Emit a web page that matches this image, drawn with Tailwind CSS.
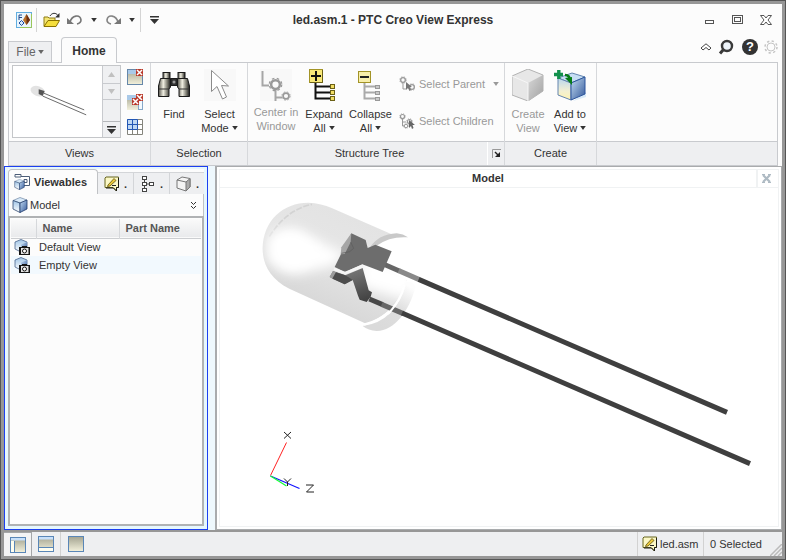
<!DOCTYPE html>
<html lang="en">
<head>
<meta charset="utf-8">
<title>led.asm.1 - PTC Creo View Express</title>
<script src="https://cdn.jsdelivr.net/npm/@tailwindcss/browser@4"></script>
</head>
<body>
<svg class="absolute size-0" aria-hidden="true">
  <defs>
    <linearGradient id="blueFace" x1="0" y1="0" x2="1" y2="1"><stop offset="0" stop-color="#c3ddf3"/><stop offset="1" stop-color="#35599b"/></linearGradient>
    <linearGradient id="creamFace" x1="0" y1="0" x2="0" y2="1"><stop offset="0" stop-color="#b9d6ef"/><stop offset=".6" stop-color="#f3f0d2"/><stop offset="1" stop-color="#fff3b0"/></linearGradient>
    <linearGradient id="paleFace" x1="0" y1="0" x2="0" y2="1"><stop offset="0" stop-color="#9fc4e6"/><stop offset="1" stop-color="#ffffff"/></linearGradient>
    <linearGradient id="greyFace" x1="0" y1="0" x2="1" y2="1"><stop offset="0" stop-color="#d8d8d8"/><stop offset="1" stop-color="#a2a2a2"/></linearGradient>
    <linearGradient id="pane" x1="0" y1="0" x2="0" y2="1"><stop offset="0" stop-color="#a3a390"/><stop offset="1" stop-color="#f3f1dc"/></linearGradient>
    <linearGradient id="barrel" x1="0" y1="0" x2="1" y2="0"><stop offset="0" stop-color="#55544c"/><stop offset=".4" stop-color="#f1efe2"/><stop offset=".75" stop-color="#77766c"/><stop offset="1" stop-color="#1b1b1b"/></linearGradient>
    <symbol id="cubeBlue" viewBox="0 0 16 16">
      <path d="M1 3.500 8 .5 15 3 8 6Z" fill="#d7e9f8" stroke="#5a7396" stroke-width=".6"/>
      <path d="M1 3.500 8 6V15.500L1 12Z" fill="url(#paleFace)" stroke="#2e4870" stroke-width=".8"/>
      <path d="M8 6 15 3V12L8 15.500Z" fill="url(#blueFace)" stroke="#1f3a6b" stroke-width=".8"/>
    </symbol>
    <symbol id="viewCam" viewBox="0 0 16 16">
      <path d="M1 3 7 .5 13 3V10L7 13 1 10Z" fill="url(#paleFace)" stroke="#4a658d" stroke-width=".8"/>
      <path d="M7 5.500 13 3V10L7 13Z" fill="url(#blueFace)"/>
      <path d="M6 8h2V7h5v1h3v8H5V8Z" fill="#151515"/><rect x="7" y="9" width="7.500" height="6" fill="#e4e4e4"/><circle cx="10.500" cy="12" r="2" fill="#fff" stroke="#111"/>
    </symbol>
    <symbol id="note" viewBox="0 0 16 16">
      <path d="M2 1H14.500V11.500H12.500V15L9 11.500H1V2Z" fill="#fbf8c6" stroke="#67641f"/>
      <path d="M14.500 2V11.500H12.500V15L9.500 12H2" fill="none" stroke="#1d1d12"/>
      <path d="M4 9 10 2.500 12 4.500 6 10 3.500 10.500Z" fill="#ecc93a" stroke="#5c500f" stroke-width=".8"/>
      <path d="M8 9.500H12" stroke="#222"/>
    </symbol>
    <symbol id="down" viewBox="0 0 7 5"><path d="M0 0H7L3.500 5Z" fill="currentColor"/></symbol>
    <symbol id="redx" viewBox="0 0 7 7"><rect width="7" height="7" fill="#b93a2b"/><path d="M1 1 6 6M6 1 1 6" stroke="#fff" stroke-width="1.500"/></symbol>
    <symbol id="ring" viewBox="0 0 12 12"><circle cx="6" cy="6" r="3.500" fill="#fafafa" stroke="currentColor" stroke-width="2"/><circle cx="6" cy="6" r="5" fill="none" stroke="currentColor" stroke-width="1" stroke-dasharray="2 2"/></symbol>
    <filter id="soft" x="-30%" y="-30%" width="160%" height="160%"><feGaussianBlur stdDeviation="18"/></filter>
    <linearGradient id="bulb" gradientUnits="userSpaceOnUse" x1="300" y1="75" x2="190" y2="335"><stop offset="0" stop-color="#e3e3e3"/><stop offset=".45" stop-color="#e6e6e6"/><stop offset="1" stop-color="#d8d8d8"/></linearGradient>
    <linearGradient id="flange" gradientUnits="userSpaceOnUse" x1="480" y1="290" x2="400" y2="420"><stop offset="0" stop-color="#fdfdfd"/><stop offset=".5" stop-color="#dedede"/><stop offset="1" stop-color="#dadada"/></linearGradient>
    <linearGradient id="post" gradientUnits="userSpaceOnUse" x1="310" y1="240" x2="340" y2="330"><stop offset="0" stop-color="#757575"/><stop offset="1" stop-color="#444"/></linearGradient>
    <clipPath id="bulbClip"><path d="M38 175C40 90 100 38 175 38Q215 40 245 54L420 132 480 300 350 402 118 296C62 268 38 225 38 175Z"/></clipPath>
  </defs>
</svg>

<div class="h-screen border border-[#555] bg-[#979797] p-[3px] font-['Liberation_Sans',Arial,sans-serif] text-[11px] leading-[14px] text-[#333]">
<div class="flex h-full flex-col bg-[#fcfcfc]">

  <header class="grid h-8 shrink-0 grid-cols-[1fr_auto_1fr] items-center">
    <div class="flex items-center pl-3">
      <svg class="size-4" viewBox="0 0 16 16"><rect x=".5" y=".5" width="15" height="15" fill="#e9f5fd" stroke="#62aee0"/><path d="M4 15.500H15.500V2" fill="none" stroke="#9bc75a"/><path d="M10.500 2 14 8 10.500 13 7 8Z" fill="#b8702a"/><path d="M10.500 2 14 8 10.500 13Z" fill="#6c2e12"/><path d="M3 3H6M3 3V8M3 5.500H6" stroke="#234a8c" fill="none"/><path d="M3 11 5.500 8.500 8 11 5.500 13.500Z" fill="#d4e8fa" stroke="#1d4ba0"/></svg>
      <span class="mx-1 h-6 w-px bg-[#d4d4d4]"></span>
      <button class="ml-0.5" aria-label="Open"><svg class="h-4 w-[18px]" viewBox="0 0 18 16"><path d="M1 14V5H5L6 6H12V9" fill="#f4e675" stroke="#8f7d15"/><path d="M1 14.500 5 8.500H16.500L13 14.500Z" fill="#f5de3c" stroke="#8a7200"/><path d="M7 4C9 .5 13 .5 15 3.500" fill="none" stroke="#333"/><path d="M16.500 1V5.500H12Z" fill="#333"/></svg></button>
      <button class="ml-1.5" aria-label="Undo"><svg class="h-3 w-4" viewBox="0 0 16 12"><path d="M3 8C5 1 13 0 14 6Q14 9 10 10" fill="none" stroke="#777" stroke-width="1.600"/><path d="M0 4V10H7Z" fill="#777"/></svg></button>
      <button class="ml-2" aria-label="Undo list"><svg class="h-1 w-1.5"><use href="#down"/></svg></button>
      <button class="ml-2" aria-label="Redo"><svg class="h-3 w-4" viewBox="0 0 16 12"><path d="M13 8C11 1 3 0 2 6Q2 9 6 10" fill="none" stroke="#858585" stroke-width="1.600"/><path d="M16 4V10H9Z" fill="#777"/></svg></button>
      <button class="ml-2" aria-label="Redo list"><svg class="h-1 w-1.5"><use href="#down"/></svg></button>
      <span class="mx-[5px] h-6 w-px bg-[#d4d4d4]"></span>
      <button class="ml-1" aria-label="Customize toolbar"><svg class="h-2 w-[9px]" viewBox="0 0 9 8"><path d="M0 .75H9" stroke="#333" stroke-width="1.500"/><path d="M0 3H9L4.500 8Z" fill="#333"/></svg></button>
    </div>
    <h1 class="text-[12px] font-bold">led.asm.1 - PTC Creo View Express</h1>
    <div class="flex items-center justify-end gap-4 pr-[10px] text-[#555]">
      <button aria-label="Minimize"><svg class="size-3" viewBox="0 0 12 12"><rect x="1.500" y="6.500" width="8" height="3" fill="none" stroke="currentColor"/></svg></button>
      <button aria-label="Maximize"><svg class="size-3" viewBox="0 0 12 12"><rect x=".5" y="1.500" width="10" height="8" fill="none" stroke="currentColor"/><rect x="2.500" y="3.500" width="6" height="4" fill="none" stroke="currentColor"/></svg></button>
      <button aria-label="Close"><svg class="size-3" viewBox="0 0 12 12"><path d="M.5 1.500H4L6 4 8 1.500H11.500L8 6 11.500 10.500H8L6 8 4 10.500H.5L4 6Z" fill="#fff" stroke="currentColor"/></svg></button>
    </div>
  </header>

  <nav class="flex h-[26px] shrink-0 items-end px-1 text-[12px]">
    <button class="flex h-[21px] w-11 items-center justify-center gap-0.5 border border-b-0 border-[#c8cace] bg-[#eeeff1] text-[#666]">File<svg class="h-1 w-1.5"><use href="#down"/></svg></button>
    <button class="relative z-10 -mb-px ml-[9px] h-[26px] w-14 rounded-t-sm border border-b-0 border-[#c8cace] bg-[#fcfcfc] font-bold">Home</button>
    <div class="ml-auto flex h-full items-center gap-1.5 pb-1">
      <button aria-label="Hide ribbon"><svg class="h-2 w-3" viewBox="0 0 12 8"><path d="M1 5 6 .8 11 5 9 7 6 4.500 3 7Z" fill="#fff" stroke="#444"/></svg></button>
      <button aria-label="Search"><svg class="size-4" viewBox="0 0 16 16"><circle cx="9" cy="7" r="5" fill="#eef4fa" stroke="#3a3a3a" stroke-width="2.400"/><path d="M5.500 10.500 2 14.500" stroke="#3a3a3a" stroke-width="3"/></svg></button>
      <button class="ml-0.5 grid size-4 place-items-center rounded-full bg-[#333] text-[13px] font-bold text-white" aria-label="Help">?</button>
      <button aria-label="Settings"><svg class="size-[14px] text-[#c5c5c5]" viewBox="0 0 14 14"><circle cx="7" cy="7" r="4" fill="none" stroke="currentColor"/><circle cx="7" cy="7" r="6" fill="none" stroke="currentColor" stroke-width="1.500" stroke-dasharray="2.300 2.400"/></svg></button>
    </div>
  </nav>

  <section class="mx-1 flex shrink-0 border border-[#c8cace] bg-[#fcfcfc] text-center" aria-label="Ribbon">
    <div class="flex w-[142px] flex-col border-r border-[#d6d8db]">
      <div class="flex h-[78px] pt-0.5 pl-[3px]">
        <div class="flex h-[73px] w-[109px] border border-[#c4c6c9] bg-white">
          <svg class="min-w-0 flex-1" viewBox="0 0 90 71"><ellipse cx="25" cy="25" rx="7.500" ry="5" transform="rotate(20 25 25)" fill="#e3e3e3"/><path d="M26 23 32 25 30 30 26 28Z" fill="#555"/><path d="M31 27 72 44M30 30 74 49" stroke="#6a6a6a"/></svg>
          <div class="flex w-[18px] flex-col border-l border-[#c8cace] bg-[#eff0f2]">
            <button class="grid h-[18px] place-items-center border-b border-[#c8cace] text-[#c0c0c0]" aria-label="Scroll up"><svg class="h-[5px] w-[7px] rotate-180"><use href="#down"/></svg></button>
            <button class="grid h-4 place-items-center border-b border-[#c8cace] text-[#c0c0c0]" aria-label="Scroll down"><svg class="h-[5px] w-[7px]"><use href="#down"/></svg></button>
            <button class="mt-auto grid h-4 place-items-center border-t border-[#b5b7ba]" aria-label="More views"><svg class="h-2 w-[9px]" viewBox="0 0 9 8"><path d="M0 .75H9" stroke="#333" stroke-width="1.500"/><path d="M0 3H9L4.500 8Z" fill="#333"/></svg></button>
          </div>
        </div>
        <div class="flex flex-col gap-[9px] pt-1 pl-1.5">
          <button aria-label="Delete view"><svg class="block size-4" viewBox="0 0 16 16"><rect x=".5" y=".5" width="15" height="15" fill="url(#pane)" stroke="#6687a9"/><path d="M1 1H15V5H1Z" fill="#a9c9e8"/><use href="#redx" x="9" y="0" width="7" height="7"/></svg></button>
          <button aria-label="Delete all views"><svg class="block size-4" viewBox="0 0 16 16"><rect x="0" y="1" width="11" height="15" fill="url(#pane)"/><path d="M0 1H12V6H0Z" fill="#a9c9e8"/><rect x="11.500" y="4" width="4" height="11.500" fill="#f4faff" stroke="#86a8c8"/><use href="#redx" x="9" y="0" width="7" height="7"/><use href="#redx" x="5" y="4" width="7" height="7"/></svg></button>
          <button aria-label="View grid"><svg class="block size-4" viewBox="0 0 16 16"><path d="M.5 .5H15.500V15.500H.5ZM.5 5.500H15.500M.5 10.500H15.500M5.500 .5V15.500M10.500 .5V15.500" fill="#fff" stroke="#84847c"/><path d="M.5 .5H10.500V10.500H.5ZM5.500 .5V10.500M.5 5.500H10.500" fill="#bfd8f4" stroke="#2357b5"/></svg></button>
        </div>
      </div>
      <h2 class="h-6 border-t border-[#c8cace] bg-[#eeeff1] pt-1">Views</h2>
    </div>

    <div class="flex w-[97px] flex-col border-r border-[#d6d8db]">
      <div class="flex h-[78px]">
        <button class="flex w-[46px] flex-col items-center pt-1.5"><svg class="h-8 w-8" viewBox="0 0 32 32"><g stroke="#1b1b1b"><rect x="5" y="3.500" width="7" height="6" fill="url(#barrel)"/><rect x="20" y="3.500" width="7" height="6" fill="url(#barrel)"/><path d="M2.500 9.500H12.500V18L11 20V27.500H.5V17Z" fill="url(#barrel)"/><path d="M19.500 9.500H29.500L31.500 17V27.500H21V20L19.500 18Z" fill="url(#barrel)"/><rect x="13" y="9.500" width="6" height="7" fill="#333"/></g><path d="M1 20H11M21 20H31" stroke="#333"/><circle cx="16" cy="13" r="1.500" fill="#999"/></svg><span class="mt-1.5 h-7">Find</span></button>
        <button class="flex w-[45px] flex-col items-center pt-1.5"><svg class="h-8 w-8" viewBox="0 0 32 32"><rect width="32" height="32" fill="#f8f8f8"/><path d="M7.500 1.500V22.500L13 17.500 18.500 30 22.500 28 17.500 16.500 24.500 17Z" fill="#fff" stroke="#8b8b8b"/></svg><span class="mt-1.5">Select<br>Mode <svg class="mb-0.5 inline h-1 w-1.5"><use href="#down"/></svg></span></button>
      </div>
      <h2 class="h-6 border-t border-[#c8cace] bg-[#eeeff1] pt-1">Selection</h2>
    </div>

    <div class="flex w-[257px] flex-col border-r border-[#d6d8db]">
      <div class="flex h-[78px] pl-1">
        <button class="flex w-12 flex-col items-center pt-1.5 text-[#999]" disabled><svg class="h-8 w-8" viewBox="0 0 32 32"><rect width="32" height="32" fill="#f8f8f8"/><path d="M2.500 2V16.500H9M15.500 21V28.500H22M15.500 27V32" fill="none" stroke="#a5a5a5" stroke-width="2"/><use href="#ring" x="8" y="8" width="15" height="15"/><use href="#ring" x="21" y="22" width="10" height="10"/></svg><span class="mt-1 whitespace-nowrap">Center in<br>Window</span></button>
        <button class="flex w-12 flex-col items-center pt-1.5"><svg class="h-8 w-8" viewBox="0 0 32 32"><path d="M7.500 13V29.500H24M7.500 17.500H24M7.500 23.500H24" fill="none" stroke="#111" stroke-width="2"/><rect x="1.500" y=".5" width="13" height="13" fill="#f8e879" stroke="#a39427"/><path d="M14.500 1V13.500H2" fill="none" stroke="#6b6016"/><path d="M3 7H13M8 2V12" stroke="#111" stroke-width="2"/><g fill="#f1dd63" stroke="#6b6016"><rect x="22.500" y="15.500" width="4" height="4"/><rect x="22.500" y="21.500" width="4" height="4"/><rect x="22.500" y="27.500" width="4" height="4"/></g></svg><span class="mt-1.5">Expand<br>All <svg class="mb-0.5 inline h-1 w-1.5"><use href="#down"/></svg></span></button>
        <button class="flex w-[45px] flex-col items-center pt-1.5"><svg class="h-8 w-8" viewBox="0 0 32 32"><path d="M9.500 13V29.500H20M9.500 17.500H20M9.500 23.500H20" fill="none" stroke="#aaa" stroke-width="2"/><rect x="3.500" y="2.500" width="12" height="11" fill="#f8efac" stroke="#a39427"/><path d="M5 8H14" stroke="#222" stroke-width="2"/><g fill="#c9c9c9" stroke="#999"><rect x="20.500" y="16.500" width="4" height="3"/><rect x="20.500" y="22.500" width="4" height="3"/><rect x="20.500" y="28.500" width="4" height="3"/></g></svg><span class="mt-1.5">Collapse<br>All <svg class="mb-0.5 inline h-1 w-1.5"><use href="#down"/></svg></span></button>
        <div class="flex flex-1 flex-col gap-[21px] pt-[13px] pl-1.5 text-[#999]">
          <button class="flex h-4 items-center gap-1 whitespace-nowrap" disabled><svg class="size-4" viewBox="0 0 16 16"><path d="M4 6V13H7" fill="none" stroke="#999"/><use href="#ring" width="8" height="8"/><use href="#ring" x="9" y="7" width="8" height="8"/><path d="M7 6V14L9 12 10.500 15 12 14 10.500 11H13Z" fill="#777"/></svg>Select Parent<svg class="ml-1 h-1 w-1.5"><use href="#down"/></svg></button>
          <button class="flex h-4 items-center gap-1 whitespace-nowrap" disabled><svg class="size-4" viewBox="0 0 16 16"><path d="M3.500 6V13H7M4 9H7" fill="none" stroke="#999"/><use href="#ring" width="7" height="7"/><use href="#ring" x="7" y="5" width="7" height="7"/><use href="#ring" x="4" y="10" width="6" height="6"/><path d="M10 7V15L12 13 13 16 14.500 15 13.500 12H16Z" fill="#666"/></svg>Select Children</button>
        </div>
      </div>
      <div class="flex h-6 border-t border-[#c8cace] bg-[#eeeff1]"><h2 class="flex-1 pt-1 pl-1">Structure Tree</h2><button class="grid w-[17px] place-items-center border-l border-white" aria-label="Structure Tree options"><svg class="size-[9px]" viewBox="0 0 9 9"><path d="M.5 9V.5H9" fill="none" stroke="#999"/><path d="M3 3 7 7" stroke="#222" stroke-width="1.500"/><path d="M8 3V8H3Z" fill="#222"/></svg></button></div>
    </div>

    <div class="flex w-[92px] flex-col border-r border-[#d6d8db]">
      <div class="flex h-[78px] pl-0.5">
        <button class="flex w-[42px] flex-col items-center pt-1.5 text-[#999]" disabled><svg class="h-8 w-8" viewBox="0 0 32 32"><path d="M0 7 16 0 31 6V22L16 32 0 26Z" fill="#e7e7e7" stroke="#b2b2b2"/><path d="M16 14 31 6V22L16 32Z" fill="url(#greyFace)"/><path d="M0 7 16 14V32" fill="none" stroke="#f6f6f6"/></svg><span class="mt-1.5">Create<br>View</span></button>
        <button class="flex w-[42px] flex-col items-center pt-1.5"><svg class="h-8 w-8" viewBox="0 0 32 32"><path d="M19 32 32 28V23Z" fill="#d7e9f8"/><path d="M4 9 18 4 31 8 17 14Z" fill="#c6def4" stroke="#6485af"/><path d="M4 9 17 14V31L4 26Z" fill="url(#creamFace)" stroke="#6485af"/><path d="M17 14 31 8V25L17 31Z" fill="url(#blueFace)" stroke="#2c559d"/><path d="M0 5.500H9M4.800 1V10" stroke="#12904c" stroke-width="3.400"/><path d="M11 6Q16 6 16 12" fill="none" stroke="#087d18" stroke-width="2.500"/><path d="M11 9 18 16V8Z" fill="#087d18"/></svg><span class="mt-1.5 whitespace-nowrap">Add to<br>View <svg class="mb-0.5 inline h-1 w-1.5"><use href="#down"/></svg></span></button>
      </div>
      <h2 class="h-6 border-t border-[#c8cace] bg-[#eeeff1] pt-1">Create</h2>
    </div>
    <div class="flex flex-1 flex-col"><div class="h-[78px]"></div><div class="h-6 border-t border-[#c8cace] bg-[#eeeff1]"></div></div>
  </section>

  <main class="flex min-h-0 flex-1 bg-[#eef8fd]">
    <aside class="flex w-[204px] shrink-0 flex-col border border-[#1c3ff0] bg-[#e6f7fd] p-[3px] pt-0.5">
      <div class="flex h-[25px] shrink-0 items-end bg-[#fcfcfc]">
        <button class="flex h-[25px] w-[90px] items-center gap-1 rounded-t-sm border border-b-0 border-[#c0c2c5] bg-[#fcfcfc] pl-[5px] font-bold"><svg class="size-4 shrink-0" viewBox="0 0 16 16"><path d="M1 .5H7V3H1ZM7 2.500H15.500V11.500H8M10 5.500H13V8.500H10Z" fill="#fff" stroke="#4d5e78"/><use href="#cubeBlue" x="0" y="5" width="11" height="11"/></svg>Viewables</button>
        <button class="flex h-[22px] w-9 items-center gap-1 border-t border-r border-[#d3d5d8] bg-[#eeeff1] pl-1.5 font-bold" aria-label="Annotations"><svg class="size-4"><use href="#note"/></svg>.</button>
        <button class="flex h-[22px] w-9 items-center gap-1 border-t border-r border-[#d3d5d8] bg-[#eeeff1] pl-1.5 font-bold" aria-label="Structure"><svg class="size-4" viewBox="0 0 16 16"><path d="M4.500 4V12M5 8H10" stroke="#444"/><g fill="#fff" stroke="#444"><rect x="2.500" y=".5" width="4" height="3"/><rect x="2.500" y="6.500" width="4" height="3"/><rect x="2.500" y="12.500" width="4" height="3"/><rect x="9.500" y="6.500" width="4" height="3"/></g></svg>.</button>
        <button class="flex h-[22px] flex-1 items-center gap-1 border-t border-[#d3d5d8] bg-[#eeeff1] pl-1.5 font-bold" aria-label="Part"><svg class="size-4 shrink-0" viewBox="0 0 16 16"><path d="M1 4 6 1 14 2.500V11L10 15 1 12Z" fill="#f4f4f4" stroke="#777"/><path d="M10 6 14 2.500V11L10 15Z" fill="#aaa" stroke="#777"/><path d="M1 4 10 6" stroke="#777"/></svg>.</button>
      </div>
      <div class="flex h-[22px] shrink-0 items-center gap-0.5 border-x border-[#c0c2c5] bg-[#fcfcfc] pl-[3px]"><svg class="size-4"><use href="#cubeBlue"/></svg>Model<button class="ml-auto mr-1.5" aria-label="Expand"><svg class="block h-[7px] w-[7px]" viewBox="0 0 7 7"><path d="M1 0 3.500 2.500 6 0M1 4 3.500 6.500 6 4" fill="none" stroke="#333"/></svg></button></div>
      <div class="flex-1 border-2 border-[#b0b2b4] bg-[#fcfcfc] px-px pt-px">
        <table class="w-full table-fixed border-collapse text-left">
          <colgroup><col class="w-[25px]"><col class="w-[83px]"><col></colgroup>
          <thead class="text-[#555]"><tr class="h-[19px] border-b border-[#ccced1] bg-linear-to-b from-[#fafafa] to-[#e9eaec]"><th class="border-r border-[#d6d8db]"></th><th class="border-r border-[#d6d8db] pl-1.5">Name</th><th class="pl-1.5">Part Name</th></tr></thead>
          <tbody>
            <tr class="h-[18px]"><td class="pl-[3px]"><svg class="block size-4"><use href="#viewCam"/></svg></td><td class="pl-[3px]">Default View</td><td></td></tr>
            <tr class="h-[18px] bg-[#f2f9fe]"><td class="pl-[3px]"><svg class="block size-4"><use href="#viewCam"/></svg></td><td class="pl-[3px]">Empty View</td><td></td></tr>
          </tbody>
        </table>
      </div>
    </aside>

    <section class="ml-[7px] flex min-w-0 flex-1 flex-col border-t border-r border-b border-l-2 border-[#a9abad] bg-white p-0.5" aria-label="Model view">
      <div class="flex min-h-0 flex-1 flex-col border border-[#f0f2f3]">
        <div class="flex h-[18px] shrink-0 border-b border-[#f0f2f3] text-center font-bold"><h2 class="flex-1 pt-px">Model</h2><button class="grid w-[22px] place-items-center border-l-2 border-[#f0f2f3] pr-1" aria-label="Close model"><svg class="size-[9px]" viewBox="0 0 9 9"><path d="M1 1 8 8M8 1 1 8" stroke="#aebac3" stroke-width="2.200"/><path d="M0 .5H3M6 .5H9M0 8.500H3M6 8.500H9" stroke="#aebac3"/></svg></button></div>
        <svg class="min-h-0 w-full flex-1" viewBox="220 188 558 338" role="img" aria-label="LED model with coordinate axes">
          <g transform="translate(250 190) scale(.33333)">
            <path d="M350 178Q395 125 474 142L453 146Q500 190 495 290C485 350 445 423 380 423Q355 422 338 408Z" fill="#fff"/>
            <path d="M38 175C40 90 100 38 175 38Q215 40 245 54L432 136Q370 152 350 200L470 270Q450 360 350 402L118 296C62 268 38 225 38 175Z" fill="url(#bulb)"/>
            <path d="M58 140Q110 58 186 43" fill="none" stroke="#d3d3d3" stroke-width="5" stroke-dasharray="18 5"/>
            <g clip-path="url(#bulbClip)"><path d="M50 150Q80 105 145 118L285 195 250 226 150 252Q95 260 50 210Z" fill="#fff" filter="url(#soft)"/><path d="M75 155Q120 120 160 145L210 190 130 230Q80 225 75 155Z" fill="#fff" filter="url(#soft)"/><path d="M330 190 520 250 470 330 330 290Z" fill="#fff" filter="url(#soft)"/></g>
            <path d="M358 175Q385 132 440 130Q460 132 474 142Q420 138 380 167Z" fill="#c9c9c9"/>
            <path d="M468 275Q495 275 496 292C478 365 430 424 380 423Q355 422 338 408 440 394 468 275Z" fill="url(#flange)"/>
            <path d="M464 285Q438 380 342 404" fill="none" stroke="#fff" stroke-width="7"/>
            <path d="M400 222 448 243" stroke="#666" stroke-width="15"/>
            <path d="M446 242 508 269" stroke="#898989" stroke-width="15"/>
            <path d="M506 268 1431 667" stroke="#3f3f3f" stroke-width="15"/>
            <path d="M358 327 398 344" stroke="#484848" stroke-width="15"/>
            <path d="M395 343 460 371" stroke="#676767" stroke-width="15"/>
            <path d="M456 369 1500 821" stroke="#3f3f3f" stroke-width="15"/>
            <path d="M414 372Q425 360 433 349" fill="none" stroke="#fff" stroke-width="6"/>
            <path d="M304 130 347 150 353 174 376 164 425 184 398 246 337 223 285 246 254 231 274 190Z" fill="#6d6d6d"/>
            <path d="M304 130 274 172 272 193 284 192 302 156Z" fill="#a5a5a5"/>
            <path d="M302 156 311 175 299 185 274 190" fill="none" stroke="#5a5a5a" stroke-width="2"/>
            <path d="M252 237 285 250 339 227" fill="none" stroke="#f5f5f5" stroke-width="8"/>
            <path d="M239 261 249 243 286 256 338 234 356 301 366 307 362 320 350 336 329 329 324 317 308 270 284 283Z" fill="url(#post)"/>
            <path d="M239 261 249 243 258 247 247 266Z" fill="#9c9c9c"/>
            <path d="M247 266 258 247 286 256 308 270 284 283Z" fill="#4d4d4d"/>
          </g>
          <g fill="none" stroke-width="1"><path d="M270.500 475.500 286.500 442.500" stroke="#f22"/><path d="M270.500 476 299.500 488.500" stroke="#11f" stroke-width="1.200"/><path d="M270.500 476 286.500 486" stroke="#1f3" stroke-width="1.200"/><path d="M284 432 291 438.500M291 432 284 438.500M284 478.500 287.500 482 291 478.500M287.500 482V486M306 485H313.500L306.500 492H314" stroke="#222"/></g>
        </svg>
      </div>
    </section>
  </main>

  <footer class="flex h-[26px] shrink-0 items-stretch border-t-2 border-[#979797] bg-[#eeeff1]">
    <button class="grid w-7 place-items-center border-t border-r border-[#a5a7a9] bg-[#f3f3f4]" aria-label="Left pane layout"><svg class="size-4" viewBox="0 0 16 16"><rect x=".5" y=".5" width="15" height="15" fill="url(#pane)" stroke="#5986b7"/><path d="M1 1H15V3.500H1Z" fill="#c8e0fa"/><path d="M1 4H4.500V15H1Z" fill="#fffef0"/><path d="M4.500 4V15" stroke="#5986b7"/></svg></button>
    <button class="grid w-7 place-items-center" aria-label="Bottom pane layout"><svg class="size-4" viewBox="0 0 16 16"><rect x=".5" y=".5" width="15" height="15" fill="url(#pane)" stroke="#5986b7"/><path d="M1 1H15V3.500H1Z" fill="#c8e0fa"/><path d="M1 11.500H15V15H1Z" fill="#fffef0"/><path d="M1 11.500H15" stroke="#5986b7"/></svg></button>
    <span class="mr-1 w-px bg-[#d2d2d2]"></span>
    <button class="grid w-[22px] place-items-center" aria-label="Full layout"><svg class="size-4" viewBox="0 0 16 16"><rect x=".5" y=".5" width="15" height="15" fill="url(#pane)" stroke="#5986b7"/></svg></button>
    <div class="ml-auto flex w-[66px] items-center gap-0.5 border-l border-[#d2d2d2] pl-1"><svg class="size-4 shrink-0"><use href="#note"/></svg>led.asm</div>
    <div class="flex w-[79px] items-center border-l border-[#d2d2d2] pl-1.5"><span class="whitespace-nowrap">0 Selected</span><svg class="ml-auto size-3 shrink-0 self-end" viewBox="0 0 12 12"><path d="M0 12 12 0M4 12 12 4M8 12 12 8" stroke="#bbb" stroke-width="1.500"/></svg></div>
  </footer>
</div>
</div>
</body>
</html>
